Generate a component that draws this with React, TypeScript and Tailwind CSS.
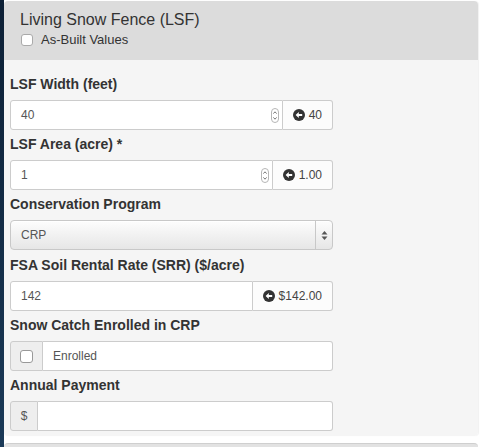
import React from 'react';

const font = { fontFamily: '"Liberation Sans", Arial, Helvetica, sans-serif' };

// glyphicon-circle-arrow-left lookalike
const CircleArrowLeft = () => (
  <svg width="12" height="12" viewBox="0 0 12 12" className="shrink-0">
    <circle cx="6" cy="6" r="6" fill="#333" />
    <path d="M2.6 6 L5.8 3 V4.9 H9.2 V7.1 H5.8 V9 Z" fill="#fff" />
  </svg>
);

// small stepper drawn at the right of number inputs
const Spinner = () => (
  <svg width="8" height="15" viewBox="0 0 8 15" className="shrink-0">
    <rect x="0.5" y="0.5" width="7" height="14" rx="3.5" fill="#fff" stroke="#b5b5b5" />
    <path d="M2.4 5.6 L4 3.8 L5.6 5.6" fill="none" stroke="#666" strokeWidth="0.9" />
    <path d="M2.4 9.4 L4 11.2 L5.6 9.4" fill="none" stroke="#666" strokeWidth="0.9" />
  </svg>
);

const Label = ({ children }: { children: React.ReactNode }) => (
  <div className="text-[14px] font-bold leading-[20px] text-[#333] mb-[6px]">{children}</div>
);

const Addon = ({ value }: { value: string }) => (
  <div className="flex items-center gap-[4px] px-[10px] bg-[#fcfcfc] border border-l-0 border-[#ccc] rounded-r-[3px] text-[12px] text-[#444]">
    <CircleArrowLeft />
    <span>{value}</span>
  </div>
);

const NumberRow = ({ value, addon, spinner = true }: { value: string; addon: string; spinner?: boolean }) => (
  <div className="flex h-[30px] w-[323px]">
    <div className="flex flex-1 items-center bg-white border border-[#ccc] rounded-l-[3px] pl-[10px] pr-[3px] text-[12px] text-[#555]">
      <span className="flex-1">{value}</span>
      {spinner && <Spinner />}
    </div>
    <Addon value={addon} />
  </div>
);

const Group = ({ label, children, last = false }: { label: string; children: React.ReactNode; last?: boolean }) => (
  <div className={last ? '' : 'mb-[4px]'}>
    <Label>{label}</Label>
    {children}
  </div>
);

export default function App() {
  return (
    <div className="flex w-[487px] h-[447px] overflow-hidden bg-white text-[#333]" style={font}>
      <div className="w-[4px] shrink-0 bg-gradient-to-b from-[#0d2036] via-[#132c46] to-[#1b3a58]" />
      <div className="w-[474px] shrink-0 pt-[1px]">
        <div className="rounded-[4px] overflow-hidden shadow-[1px_0_1px_rgba(0,0,0,0.06)]">
          {/* heading */}
          <div className="bg-[#dcdcdc] px-[16px] pt-[10px] pb-[11px]">
            <div className="text-[16px] leading-[18px] text-[#333]">Living Snow Fence (LSF)</div>
            <label className="flex items-center mt-[2px] leading-[18px] text-[13px] text-[#333]">
              <span className="w-[12px] h-[12px] rounded-[3px] bg-white border border-[#aaa] mr-[8px] ml-[1px]" />
              As-Built Values
            </label>
          </div>

          {/* body */}
          <div className="bg-[#f5f5f5] px-[6px] pt-[14px] pb-[5px]">
            <Group label="LSF Width (feet)">
              <NumberRow value="40" addon="40" />
            </Group>

            <Group label="LSF Area (acre) *">
              <NumberRow value="1" addon="1.00" />
            </Group>

            <div className="mb-[5px]">
              <Label>Conservation Program</Label>
              <div className="flex h-[30px] w-[323px] rounded-[4px] border border-[#c8c8c8] bg-gradient-to-b from-[#fdfdfd] to-[#e6e6e6] shadow-[inset_0_1px_0_#fff] text-[12px] text-[#555]">
                <span className="flex-1 flex items-center pl-[10px]">CRP</span>
                <span className="w-[17px] flex items-center justify-center border-l border-[#c8c8c8]">
                  <svg width="7" height="11" viewBox="0 0 7 11">
                    <path d="M3.5 1 L6.5 4.5 H0.5 Z" fill="#555" />
                    <path d="M3.5 10 L6.5 6.5 H0.5 Z" fill="#555" />
                  </svg>
                </span>
              </div>
            </div>

            <Group label="FSA Soil Rental Rate (SRR) ($/acre)">
              <NumberRow value="142" addon="$142.00" spinner={false} />
            </Group>

            <Group label="Snow Catch Enrolled in CRP">
              <div className="flex h-[30px] w-[323px]">
                <div className="w-[33px] flex items-center justify-center bg-[#eee] border border-[#ccc] rounded-l-[3px]">
                  <span className="w-[13px] h-[13px] rounded-[3px] bg-white border border-[#999]" />
                </div>
                <div className="flex-1 flex items-center bg-white border border-l-0 border-[#ccc] rounded-r-[3px] pl-[10px] text-[12px] text-[#555]">
                  Enrolled
                </div>
              </div>
            </Group>

            <Group label="Annual Payment" last>
              <div className="flex h-[30px] w-[323px]">
                <div className="w-[28px] flex items-center justify-center bg-[#eee] border border-[#ccc] rounded-l-[3px] text-[12px] text-[#555]">
                  $
                </div>
                <div className="flex-1 bg-white border border-l-0 border-[#ccc] rounded-r-[3px]" />
              </div>
            </Group>
          </div>
        </div>

        {/* next panel peeking in */}
        <div className="mt-[7px] h-[10px] rounded-t-[4px] border-t border-[#cfcfcf] bg-[#e2e2e2]" />
      </div>
    </div>
  );
}
